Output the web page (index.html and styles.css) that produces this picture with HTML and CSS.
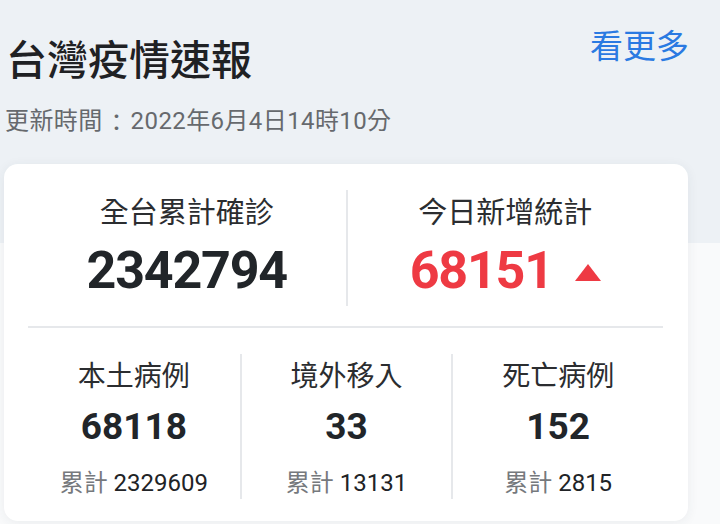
FILE: index.html
```html
<!DOCTYPE html>
<html lang="zh-Hant">
<head>
<meta charset="utf-8">
<title>台灣疫情速報</title>
<link rel="stylesheet" href="styles.css">
</head>
<body>
<header class="header">
  <div class="header-row">
    <h1 class="title">台灣疫情速報</h1>
    <a class="more" href="#">看更多</a>
  </div>
  <p class="updated">更新時間<span class="colon">：</span>2022年6月4日14時10分</p>
</header>
<section class="card">
  <div class="top-row">
    <div class="stat">
      <div class="label">全台累計確診</div>
      <div class="big">2342794</div>
    </div>
    <div class="stat">
      <div class="label">今日新增統計</div>
      <div class="big red">68151<svg class="arrow" width="26" height="17" viewBox="0 0 26 17"><polygon points="13,0 26,17 0,17" fill="#ee3a43"/></svg></div>
    </div>
  </div>
  <div class="hr"></div>
  <div class="bottom-row">
    <div class="cell">
      <div class="label sm">本土病例</div>
      <div class="mid">68118</div>
      <div class="sub"><span class="sub-k">累計</span> 2329609</div>
    </div>
    <div class="cell">
      <div class="label sm">境外移入</div>
      <div class="mid">33</div>
      <div class="sub"><span class="sub-k">累計</span> 13131</div>
    </div>
    <div class="cell">
      <div class="label sm">死亡病例</div>
      <div class="mid">152</div>
      <div class="sub"><span class="sub-k">累計</span> 2815</div>
    </div>
  </div>
</section>
</body>
</html>
```

FILE: styles.css
```css
html, body {
  margin: 0;
  padding: 0;
}
body {
  width: 720px;
  height: 524px;
  overflow: hidden;
  font-family: Roboto, "Noto Sans CJK TC", sans-serif;
  background: linear-gradient(to bottom, #edf1f5 0, #edf1f5 243px, #f9fafb 243px, #f9fafb 100%);
  color: #212326;
}
.header {
  padding: 20px 31px 0 5px;
}
.header-row {
  display: flex;
  justify-content: space-between;
  align-items: flex-start;
}
.title {
  margin: 9px 0 0 1px;
  font-size: 41px;
  line-height: 56px;
  font-weight: 500;
  color: #1f2124;
  font-family: "Noto Sans CJK TC", sans-serif;
}
.more {
  font-size: 33px;
  line-height: 48px;
  color: #2a7ae2;
  text-decoration: none;
  font-family: "Noto Sans CJK TC", sans-serif;
}
.updated {
  margin: 20px 0 0 0;
  height: 32px;
  font-size: 24px;
  line-height: 32px;
  color: #66696d;
  letter-spacing: 0.4px;
}
.colon {
  display: inline-block;
  width: 28px;
  height: 32px;
  line-height: 32px;
  vertical-align: top;
  text-align: center;
  font-family: "Noto Sans CJK TC", sans-serif;
}
.card {
  margin: 27px 0 0 4px;
  width: 684px;
  box-sizing: border-box;
  background: #fff;
  border-radius: 14px;
  box-shadow: 0 2px 12px rgba(40, 50, 70, 0.07);
  padding: 26px 25px 22px 24px;
}
.top-row {
  display: grid;
  grid-template-columns: 1fr 1fr;
}
.stat {
  display: flex;
  flex-direction: column;
  align-items: center;
  padding-bottom: 8px;
}
.stat + .stat {
  border-left: 2px solid #e6e8eb;
}
.label {
  font-size: 29px;
  line-height: 40px;
  color: #2b2d30;
  font-family: "Noto Sans CJK TC", sans-serif;
}
.big {
  margin-top: 14px;
  font-size: 52px;
  line-height: 54px;
  font-weight: 700;
  letter-spacing: -1.2px;
  color: #212529;
  display: flex;
  align-items: center;
  gap: 22px;
}
.big.red {
  color: #ee3a43;
}
.arrow {
  display: block;
  margin-top: 2px;
}
.hr {
  height: 2px;
  background: #e6e8eb;
  margin: 20px 0 26px 0;
}
.bottom-row {
  display: grid;
  grid-template-columns: 1fr 1fr 1fr;
}
.cell {
  display: flex;
  flex-direction: column;
  align-items: center;
  padding-bottom: 1px;
}
.cell + .cell {
  border-left: 2px solid #e6e8eb;
}
.label.sm {
  font-size: 28px;
}
.mid {
  margin-top: 14px;
  font-size: 37px;
  line-height: 37px;
  font-weight: 700;
  color: #212529;
}
.sub {
  margin-top: 23px;
  font-size: 24px;
  line-height: 30px;
  color: #212326;
}
.sub-k {
  color: #76797d;
}
```
